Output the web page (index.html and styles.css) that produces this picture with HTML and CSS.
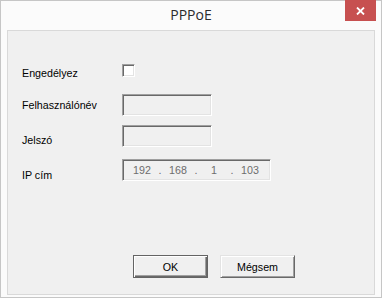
FILE: index.html
```html
<!DOCTYPE html>
<html lang="hu">
<head>
<meta charset="utf-8">
<title>PPPoE</title>
<link rel="stylesheet" href="styles.css">
</head>
<body>
<div class="window">
  <div class="titlebar">
    <span class="title">PPPoE</span>
    <button class="close" aria-label="Bezárás">
      <svg width="9" height="8" viewBox="0 0 9 8"><path d="M1 0.5 L8 7.5 M8 0.5 L1 7.5" stroke="#fff" stroke-width="1.8" fill="none"/></svg>
    </button>
  </div>
  <div class="panel">
    <div class="form">
      <div class="row row-enable">
        <label class="label">Engedélyez</label>
        <span class="checkbox"></span>
      </div>
      <div class="row row-user">
        <label class="label">Felhasználónév</label>
        <span class="textbox"></span>
      </div>
      <div class="row row-pass">
        <label class="label">Jelszó</label>
        <span class="textbox"></span>
      </div>
      <div class="row row-ip">
        <label class="label">IP cím</label>
        <span class="ipbox">
          <span class="octet">192</span><span class="dot">.</span><span class="octet">168</span><span class="dot">.</span><span class="octet">1</span><span class="dot">.</span><span class="octet">103</span>
        </span>
      </div>
    </div>
    <div class="buttons">
      <button class="btn btn-default">OK</button>
      <button class="btn">Mégsem</button>
    </div>
  </div>
</div>
</body>
</html>
```
FILE: styles.css
```css
* { box-sizing: border-box; }
html, body { margin: 0; padding: 0; background: #fbfbfb; }
body { font-family: "Liberation Sans", Arial, sans-serif; font-size: 10.7px; color: #000; }

.window {
  position: relative;
  width: 382px;
  height: 298px;
  border: 1px solid #c6c6c6;
  background: #fbfbfb;
  display: flex;
  flex-direction: column;
}

.titlebar {
  height: 29px;
  padding-top: 4px;
  text-align: center;
}
.title {
  font-family: "Open Sans", "Noto Sans", sans-serif;
  font-size: 14px;
  line-height: 20px;
  color: #2b2b2b;
}
.close {
  position: absolute;
  top: -1px;
  right: 5px;
  width: 31px;
  height: 21px;
  border: 0;
  padding: 0;
  background: #c75050;
  display: flex;
  align-items: center;
  justify-content: center;
}
.close svg { display: block; margin-top: 1px; }

.panel {
  flex: 1;
  margin: 0 6px 2px;
  border: 1px solid #d9d9d9;
  background: #f0f0f0;
}

.form {
  padding: 33px 0 0 14px;
}
.row {
  display: flex;
  align-items: flex-start;
}
.label {
  width: 100px;
  line-height: 13px;
  white-space: nowrap;
}
.row-enable .label { margin-top: 3px; }
.row-user { margin-top: 14px; }
.row-user .label { margin-top: 5px; }
.row-pass { margin-top: 9px; }
.row-pass .label { margin-top: 9px; }
.row-ip { margin-top: 12px; }
.row-ip .label { margin-top: 10px; }

.checkbox {
  width: 13px;
  height: 13px;
  background: #fff;
  border-top: 1px solid #a0a0a0;
  border-left: 1px solid #a0a0a0;
  border-bottom: 1px solid #fff;
  border-right: 1px solid #fff;
  box-shadow: inset 1px 1px 0 #696969, inset -1px -1px 0 #e3e3e3;
}

.textbox, .ipbox {
  height: 22px;
  background: #f0f0f0;
  border-top: 1px solid #a0a0a0;
  border-left: 1px solid #a0a0a0;
  border-bottom: 1px solid #fff;
  border-right: 1px solid #fff;
  box-shadow: inset 1px 1px 0 #696969, inset -1px -1px 0 #e3e3e3;
}
.textbox { width: 90px; }
.ipbox {
  width: 149px;
  display: flex;
  align-items: center;
  padding-left: 5px;
  color: #6d6d6d;
  line-height: 13px;
  padding-top: 1px;
}
.octet { width: 28px; text-align: center; }
.dot { width: 8px; text-align: center; }

.buttons {
  display: flex;
  gap: 12px;
  margin-top: 73px;
  padding-left: 125px;
}
.btn {
  width: 75px;
  height: 23px;
  padding: 0;
  font-family: "Liberation Sans", Arial, sans-serif;
  font-size: 10.7px;
  color: #000;
  background: #f0f0f0;
  border-top: 1px solid #e3e3e3;
  border-left: 1px solid #e3e3e3;
  border-bottom: 1px solid #696969;
  border-right: 1px solid #696969;
  box-shadow: inset 1px 1px 0 #fff, inset -1px -1px 0 #a0a0a0;
}
.btn-default {
  border: 1px solid #646464;
  box-shadow: inset 1px 1px 0 #fff, inset -1px -1px 0 #696969, inset -2px -2px 0 #a0a0a0;
}
```
